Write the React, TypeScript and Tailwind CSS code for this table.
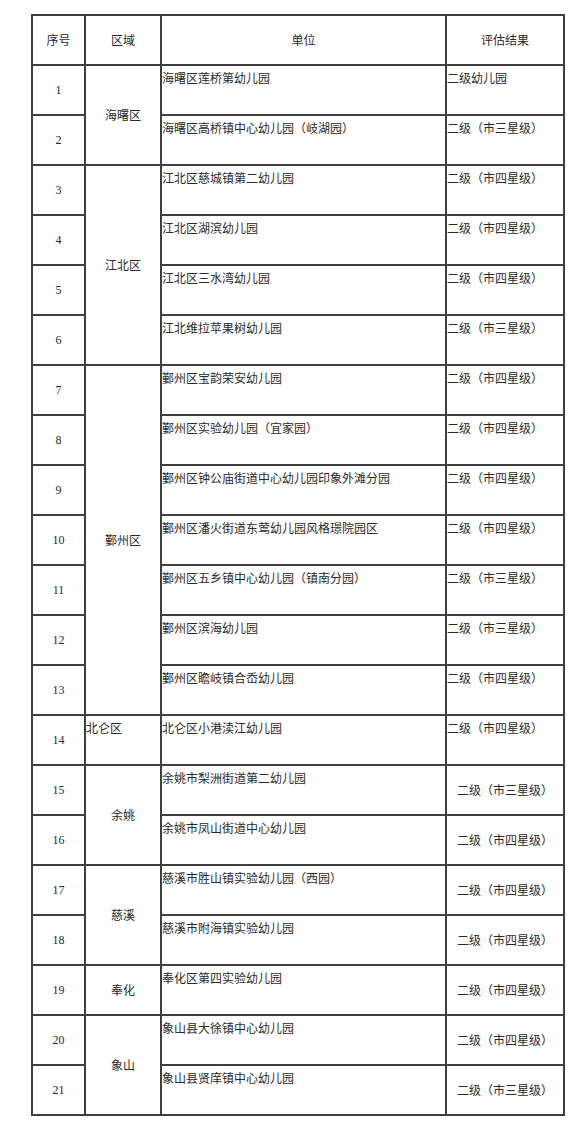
import React from "react";

type Row = { n: number; unit: string; result: string; center?: boolean };

const rows: Row[] = [
  { n: 1, unit: "海曙区莲桥第幼儿园", result: "二级幼儿园" },
  { n: 2, unit: "海曙区高桥镇中心幼儿园（岐湖园）", result: "二级（市三星级）" },
  { n: 3, unit: "江北区慈城镇第二幼儿园", result: "二级（市四星级）" },
  { n: 4, unit: "江北区湖滨幼儿园", result: "二级（市四星级）" },
  { n: 5, unit: "江北区三水湾幼儿园", result: "二级（市四星级）" },
  { n: 6, unit: "江北维拉苹果树幼儿园", result: "二级（市三星级）" },
  { n: 7, unit: "鄞州区宝韵荣安幼儿园", result: "二级（市四星级）" },
  { n: 8, unit: "鄞州区实验幼儿园（宜家园）", result: "二级（市四星级）" },
  { n: 9, unit: "鄞州区钟公庙街道中心幼儿园印象外滩分园", result: "二级（市四星级）" },
  { n: 10, unit: "鄞州区潘火街道东莺幼儿园风格璟院园区", result: "二级（市四星级）" },
  { n: 11, unit: "鄞州区五乡镇中心幼儿园（镇南分园）", result: "二级（市三星级）" },
  { n: 12, unit: "鄞州区滨海幼儿园", result: "二级（市三星级）" },
  { n: 13, unit: "鄞州区瞻岐镇合岙幼儿园", result: "二级（市四星级）" },
  { n: 14, unit: "北仑区小港渎江幼儿园", result: "二级（市四星级）" },
  { n: 15, unit: "余姚市梨洲街道第二幼儿园", result: "二级（市三星级）", center: true },
  { n: 16, unit: "余姚市凤山街道中心幼儿园", result: "二级（市四星级）", center: true },
  { n: 17, unit: "慈溪市胜山镇实验幼儿园（西园）", result: "二级（市四星级）", center: true },
  { n: 18, unit: "慈溪市附海镇实验幼儿园", result: "二级（市四星级）", center: true },
  { n: 19, unit: "奉化区第四实验幼儿园", result: "二级（市四星级）", center: true },
  { n: 20, unit: "象山县大徐镇中心幼儿园", result: "二级（市四星级）", center: true },
  { n: 21, unit: "象山县贤庠镇中心幼儿园", result: "二级（市三星级）", center: true },
];

const regions: Record<number, { name: string; span: number; left?: boolean }> = {
  1: { name: "海曙区", span: 2 },
  3: { name: "江北区", span: 4 },
  7: { name: "鄞州区", span: 7 },
  14: { name: "北仑区", span: 1, left: true },
  15: { name: "余姚", span: 2 },
  17: { name: "慈溪", span: 2 },
  19: { name: "奉化", span: 1 },
  20: { name: "象山", span: 2 },
};

const cell = "border-2 border-[#3f3f3f] p-0";

export default function App() {
  return (
    <div
      className="bg-white w-[586px] h-[1132px] pt-[14px] pl-[31px] text-[12px] leading-[14px] text-[#2a2a2a]"
      style={{ fontFamily: '"Noto Sans CJK SC", "Noto Sans", sans-serif' }}
    >
      <table className="border-collapse table-fixed w-[532px]">
        <colgroup>
          <col className="w-[53px]" />
          <col className="w-[76px]" />
          <col className="w-[285px]" />
          <col className="w-[118px]" />
        </colgroup>
        <tbody>
          <tr className="h-[50px]">
            <td className={`${cell} text-center align-middle`}>序号</td>
            <td className={`${cell} text-center align-middle`}>区域</td>
            <td className={`${cell} text-center align-middle`}>单位</td>
            <td className={`${cell} text-center align-middle`}>评估结果</td>
          </tr>
          {rows.map((r) => {
            const reg = regions[r.n];
            return (
              <tr key={r.n} className="h-[50px]">
                <td
                  className={`${cell} text-center align-middle`}
                  style={{ fontFamily: '"Liberation Serif", serif' }}
                >
                  {r.n}
                </td>
                {reg &&
                  (reg.left ? (
                    <td rowSpan={reg.span} className={`${cell} text-left align-top pt-[5px]`}>
                      {reg.name}
                    </td>
                  ) : (
                    <td rowSpan={reg.span} className={`${cell} text-center align-middle`}>
                      {reg.name}
                    </td>
                  ))}
                <td className={`${cell} text-left align-top pt-[5px] whitespace-nowrap`}>{r.unit}</td>
                {r.center ? (
                  <td className={`${cell} text-center align-middle whitespace-nowrap`}>{r.result}</td>
                ) : (
                  <td className={`${cell} text-left align-top pt-[5px] whitespace-nowrap`}>{r.result}</td>
                )}
              </tr>
            );
          })}
        </tbody>
      </table>
    </div>
  );
}
